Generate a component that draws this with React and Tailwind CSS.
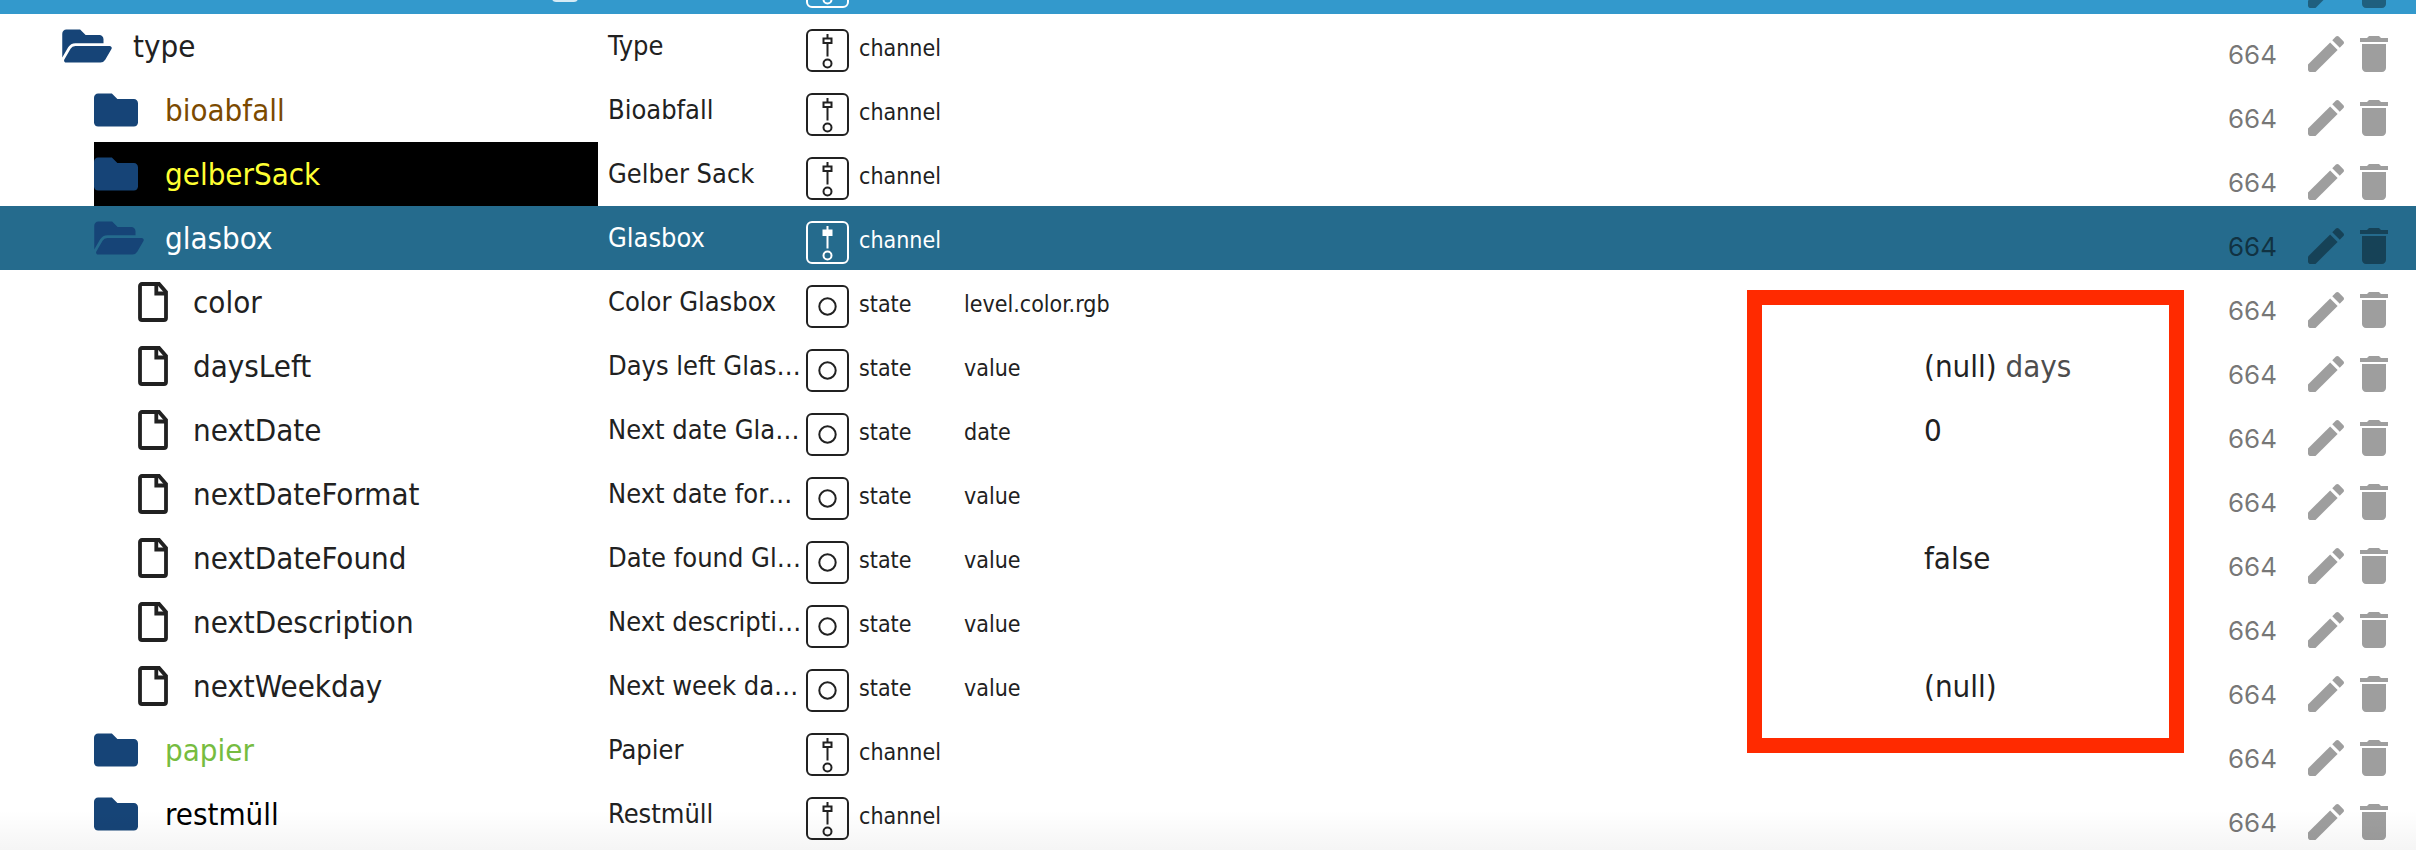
import { FaFolder, FaFolderOpen } from "react-icons/fa";
import { MdDelete } from "react-icons/md";

const rows = [
  { id: "type", name: "Type", kind: "channel", level: 0, open: true },
  { id: "bioabfall", name: "Bioabfall", kind: "channel", level: 1, color: "text-[#7b4a00]" },
  { id: "gelberSack", name: "Gelber Sack", kind: "channel", level: 1, color: "bg-black text-[#ffff33]" },
  { id: "glasbox", name: "Glasbox", kind: "channel", level: 1, open: true, selected: true },
  { id: "color", name: "Color Glasbox", kind: "state", role: "level.color.rgb" },
  { id: "daysLeft", name: "Days left Glas…", kind: "state", role: "value", value: "(null)", unit: "days" },
  { id: "nextDate", name: "Next date Gla…", kind: "state", role: "date", value: "0" },
  { id: "nextDateFormat", name: "Next date for…", kind: "state", role: "value" },
  { id: "nextDateFound", name: "Date found Gl…", kind: "state", role: "value", value: "false" },
  { id: "nextDescription", name: "Next descripti…", kind: "state", role: "value" },
  { id: "nextWeekday", name: "Next week da…", kind: "state", role: "value", value: "(null)" },
  { id: "papier", name: "Papier", kind: "channel", level: 1, color: "text-[#76bc40]" },
  { id: "restmüll", name: "Restmüll", kind: "channel", level: 1, color: "text-black" },
];

function DocIcon() {
  return (
    <svg className="h-10 w-[30px] shrink-0" viewBox="0 0 30 40" fill="none" stroke="currentColor" strokeWidth="3.8">
      <path d="M4 2h17l7 8v26a2 2 0 0 1-2 2H4a2 2 0 0 1-2-2V4a2 2 0 0 1 2-2z" />
      <path d="M18.300 2v9.500H28" />
    </svg>
  );
}

function PencilIcon() {
  return (
    <svg className="size-12" viewBox="0 0 24 24" fill="currentColor">
      <path d="M3 17.250V19.600Q3 21 4.400 21H6.750L17.810 9.940l-3.750-3.750L3 17.250z" />
      <path d="M20.710 7.040c.39-.39.39-1.020 0-1.410l-2.340-2.340c-.39-.39-1.020-.39-1.410 0l-1.830 1.830 3.750 3.750 1.830-1.830z" />
    </svg>
  );
}

function KindIcon({ kind, filled }) {
  return (
    <svg className="mt-1 size-[43px] shrink-0" viewBox="0 0 43 43" fill="none" stroke="currentColor" strokeWidth="2">
      <rect x="1" y="1" width="41" height="41" rx="5" />
      {kind === "state" ? (
        <circle cx="21.5" cy="21.5" r="8.2" />
      ) : (
        <>
          <path d="M21.500 5v4M21.500 14v13.500" />
          <rect x="17.500" y="9.500" width="8" height="4.500" fill={filled ? "currentColor" : "none"} />
          <circle cx="21.500" cy="34.500" r="4" />
        </>
      )}
    </svg>
  );
}

function Actions({ id }) {
  return (
    <div className="flex pt-4 text-black/38">
      <button aria-label={`Edit ${id}`}><PencilIcon /></button>
      <button aria-label={`Delete ${id}`}><MdDelete className="size-12" /></button>
    </div>
  );
}

function Row({ row }) {
  const isState = row.kind === "state";
  return (
    <tr className={row.selected ? "h-16 bg-[#256b8d] text-white" : "h-16 text-[#212121]"}>
      <td className={isState ? "pl-[138px]" : row.level ? "pl-[94px]" : "pl-[62px]"}>
        <div className={`flex h-16 items-center text-[31px] ${row.color ?? ""}`}>
          <span className={isState ? "flex w-[55px] shrink-0" : "flex w-[71px] shrink-0"}>
            {isState && <DocIcon />}
            {!isState && row.open && <FaFolderOpen className="h-[44px] w-[50px] text-[#164477]" />}
            {!isState && !row.open && <FaFolder className="size-11 text-[#164477]" />}
          </span>
          {row.id}
        </div>
      </td>
      <td className="pl-[10px] text-[27px] whitespace-nowrap">{row.name}</td>
      <td>
        <div className="flex items-center gap-[10px] pt-1 pl-2 text-[23px]">
          <KindIcon kind={row.kind} filled={row.selected} />
          {row.kind}
        </div>
      </td>
      <td className="pt-1 text-[23px]">{row.role}</td>
      <td className="text-[31px]">
        {row.value}
        {row.unit && <span className="opacity-80"> {row.unit}</span>}
      </td>
      <td className="pt-4 font-[Inter] text-[26px] text-black/54">664</td>
      <td><Actions id={row.id} /></td>
    </tr>
  );
}

export default function App() {
  return (
    <main className="relative overflow-hidden bg-white pb-1 font-['DejaVu_Sans_Condensed',Tahoma,sans-serif]">
      {/* the table is scrolled, so only the foot of the instance row shows */}
      <table className="-mt-[50px] w-full table-fixed border-collapse">
        <colgroup>
          <col className="w-[598px]" />
          <col className="w-[200px]" />
          <col className="w-[166px]" />
          <col />
          <col className="w-[304px]" />
          <col className="w-[74px]" />
          <col className="w-[114px]" />
        </colgroup>
        <tbody>
          <tr className="h-16 bg-[#3399cc] text-white">
            <td>
              <div className="flex h-16 items-end justify-end pr-5 pb-3">
                <span className="h-8 w-[26px] rounded bg-white/80" />
              </div>
            </td>
            <td />
            <td>
              <div className="pt-1 pl-2"><KindIcon kind="channel" /></div>
            </td>
            <td />
            <td />
            <td className="pt-4 font-[Inter] text-[26px] text-black/54">664</td>
            <td><Actions id="instance" /></td>
          </tr>
          {rows.map((row) => <Row key={row.id} row={row} />)}
        </tbody>
      </table>
      <div className="pointer-events-none absolute top-[290px] right-[232px] h-[463px] w-[437px] border-[15px] border-[#ff2a00]" />
      <div className="pointer-events-none absolute inset-x-0 bottom-0 h-10 bg-linear-to-b from-transparent to-black/4" />
    </main>
  );
}
